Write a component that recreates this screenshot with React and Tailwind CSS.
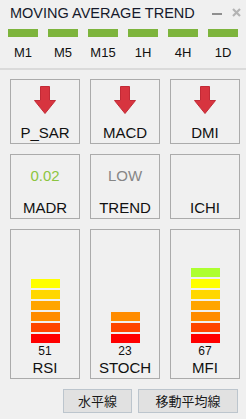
import React from "react";

const frames = ["M1", "M5", "M15", "1H", "4H", "1D"];

const levelColors = ["#ff0000", "#ff4500", "#ff8c00", "#ffa500", "#ffd700", "#ffff00", "#adff2f"];

const meters = [
  { name: "RSI", value: 51, level: 6 },
  { name: "STOCH", value: 23, level: 3 },
  { name: "MFI", value: 67, level: 7 },
];

function DownArrow() {
  return (
    <svg width="22" height="28" viewBox="0 0 22 28">
      <path
        d="M6.5 0.5 H15.5 V14.5 H21.5 L11 27.5 L0.5 14.5 H6.5 Z"
        fill="#d7343f"
        stroke="#c22a36"
        strokeWidth="1"
      />
    </svg>
  );
}

function Box({ children, className = "" }) {
  return (
    <div className={`w-[70px] border border-[#ababab] flex flex-col items-center ${className}`}>
      {children}
    </div>
  );
}

export default function App() {
  const font = { fontFamily: '"Liberation Sans", Arial, sans-serif' };
  return (
    <div className="w-[246px] h-[419px] bg-[#f0f0f0] text-[#111] overflow-hidden" style={font}>
      {/* header */}
      <div className="relative pt-[4px]">
        <div className="pl-[10px] text-[14.5px] leading-[18px] text-[#15192b]">MOVING AVERAGE TREND</div>
        <div className="absolute left-[212px] top-[13px] w-[10px] h-[2px] bg-[#8f8f8f]" />
        <svg className="absolute left-[232px] top-[8px]" width="9" height="9" viewBox="0 0 9 9">
          <path d="M1 1 L8 8 M8 1 L1 8" stroke="#b4b4b4" strokeWidth="2.2" />
        </svg>

        <div className="flex gap-[10px] pl-[8px] mt-[7px]">
          {frames.map((f) => (
            <div key={f} className="w-[30px] flex flex-col items-center">
              <div className="w-[30px] h-[8px] bg-[#7db43c]" />
              <div className="mt-[8px] text-[13px] leading-[15px] whitespace-nowrap">{f}</div>
            </div>
          ))}
        </div>
      </div>

      <div className="mt-[8px] h-[2px] bg-[#dadada]" />

      {/* row 1 */}
      <div className="flex gap-[10px] pl-[10px] mt-[9px]">
        {["P_SAR", "MACD", "DMI"].map((n) => (
          <Box key={n} className="h-[65px] pt-[6px]">
            <DownArrow />
            <div className="mt-[10px] text-[15px] leading-[18px]">{n}</div>
          </Box>
        ))}
      </div>

      {/* row 2 */}
      <div className="flex gap-[10px] pl-[10px] mt-[10px]">
        {[
          { n: "MADR", v: "0.02", c: "text-[#8cc540]" },
          { n: "TREND", v: "LOW", c: "text-[#868686]" },
          { n: "ICHI", v: "", c: "" },
        ].map((b) => (
          <Box key={b.n} className="h-[65px] pt-[11.5px]">
            <div className={`h-[18px] text-[15px] leading-[18px] ${b.c}`}>{b.v}</div>
            <div className="mt-[14px] text-[15px] leading-[18px]">{b.n}</div>
          </Box>
        ))}
      </div>

      {/* row 3 */}
      <div className="flex gap-[10px] pl-[10px] mt-[10px]">
        {meters.map((m) => (
          <Box key={m.name} className="h-[150px] justify-end pb-[2.5px]">
            <div className="flex flex-col-reverse gap-[2px]">
              {levelColors.slice(0, m.level).map((c) => (
                <div key={c} className="w-[29px] h-[9px]" style={{ backgroundColor: c }} />
              ))}
            </div>
            <div className="mt-[2px] text-[12px] leading-[13px]">{m.value}</div>
            <div className="mt-[0.5px] text-[15px] leading-[17px]">{m.name}</div>
          </Box>
        ))}
      </div>

      {/* buttons */}
      <div
        className="flex justify-end gap-[6px] pr-[8px] mt-[10px]"
        style={{ fontFamily: '"Noto Sans CJK JP", "Noto Sans CJK SC", sans-serif' }}
      >
        <button className="w-[69px] h-[24px] bg-[#e1e1e1] border border-[#bcc5cd] text-[13px] leading-[22px] text-[#1a1a1a]">
          水平線
        </button>
        <button className="w-[100px] h-[24px] bg-[#e1e1e1] border border-[#bcc5cd] text-[13px] leading-[22px] text-[#1a1a1a]">
          移動平均線
        </button>
      </div>
    </div>
  );
}
